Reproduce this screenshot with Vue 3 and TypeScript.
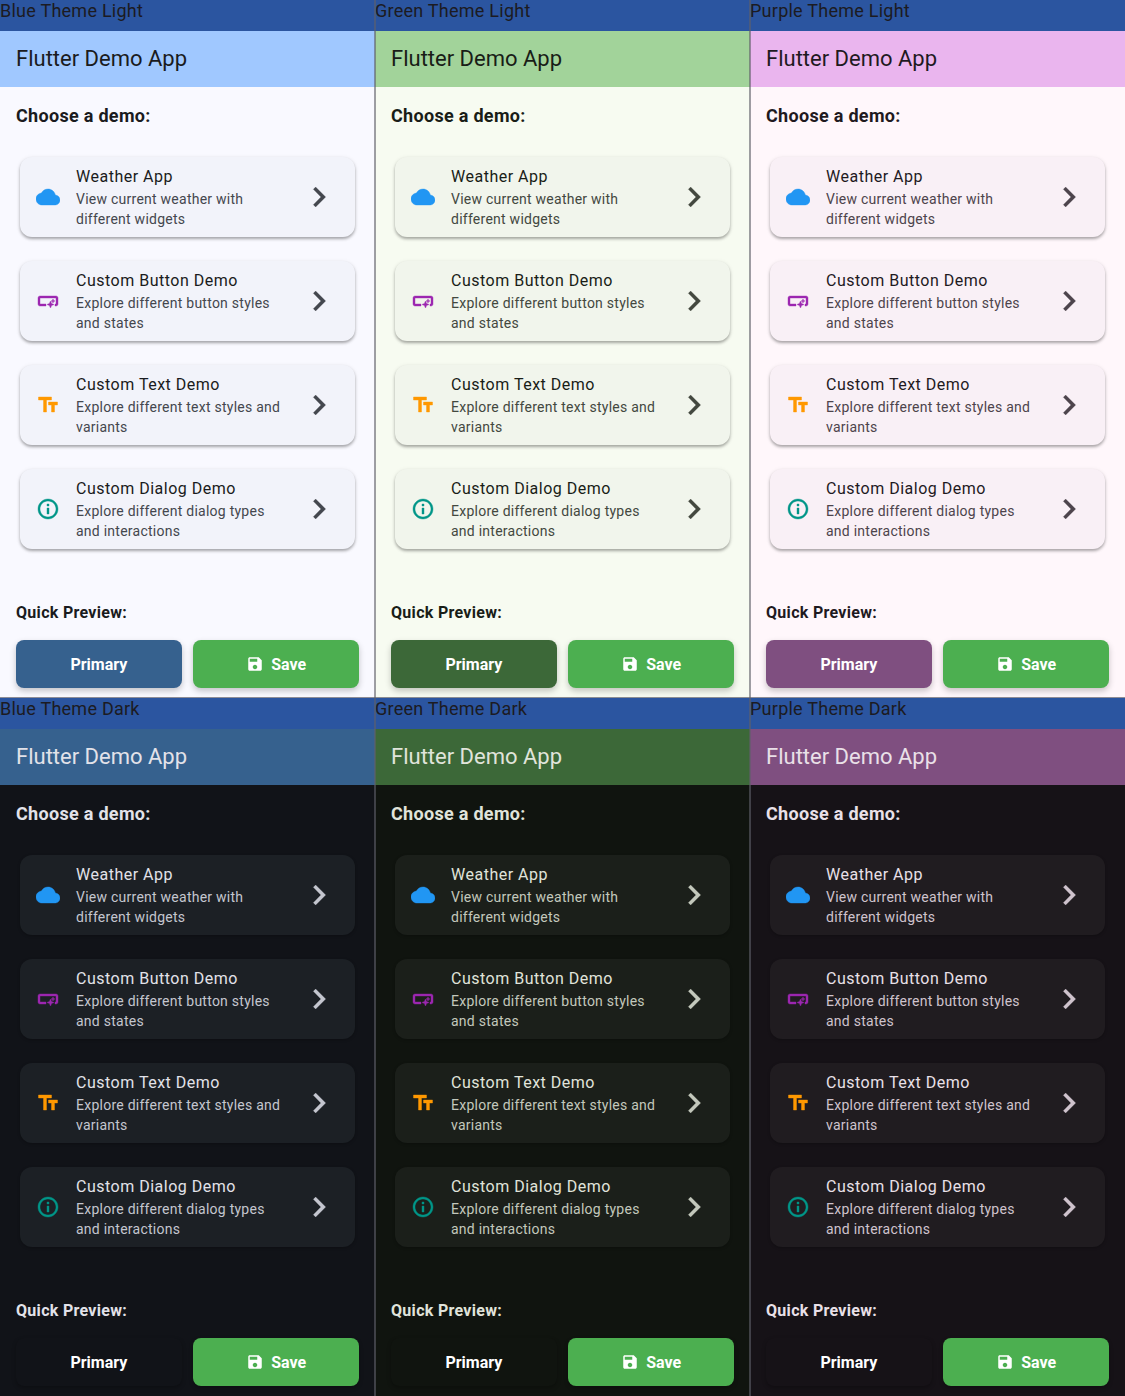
<script setup lang="ts">
const themes = [
  { key: 'blue-light', label: 'Blue Theme Light' },
  { key: 'green-light', label: 'Green Theme Light' },
  { key: 'purple-light', label: 'Purple Theme Light' },
  { key: 'blue-dark', label: 'Blue Theme Dark' },
  { key: 'green-dark', label: 'Green Theme Dark' },
  { key: 'purple-dark', label: 'Purple Theme Dark' },
]

const demos = [
  {
    title: 'Weather App',
    sub: 'View current weather with different widgets',
    color: '#2196f3',
    icon: 'M19.35 10.04C18.67 6.59 15.64 4 12 4 9.11 4 6.6 5.64 5.35 8.04 2.34 8.36 0 10.91 0 14c0 3.31 2.69 6 6 6h13c2.76 0 5-2.24 5-5 0-2.64-2.05-4.78-4.65-4.96z',
  },
  {
    title: 'Custom Button Demo',
    sub: 'Explore different button styles and states',
    color: '#9c27b0',
    icon: 'M22 9v6c0 1.1-.9 2-2 2h-1v-2h1V9H4v6h6v2H4c-1.1 0-2-.9-2-2V9c0-1.1.9-2 2-2h16c1.1 0 2 .9 2 2zm-7.5 10 1.09-2.41L18 15.5l-2.41-1.09L14.5 12l-1.09 2.41L11 15.5l2.41 1.09L14.5 19zm2.5-5 .62-1.38L19 12l-1.38-.62L17 10l-.62 1.38L15 12l1.38.62L17 14z',
  },
  {
    title: 'Custom Text Demo',
    sub: 'Explore different text styles and variants',
    color: '#ff9800',
    icon: 'M2.5 4v3h5v12h3V7h5V4h-13zm19 5h-9v3h3v7h3v-7h3V9z',
  },
  {
    title: 'Custom Dialog Demo',
    sub: 'Explore different dialog types and interactions',
    color: '#009688',
    icon: 'M11 7h2v2h-2zm0 4h2v6h-2zm1-9C6.48 2 2 6.48 2 12s4.48 10 10 10 10-4.48 10-10S17.52 2 12 2zm0 18c-4.41 0-8-3.59-8-8s3.59-8 8-8 8 3.59 8 8-3.59 8-8 8z',
  },
]
</script>

<template>
  <div class="grid">
    <section v-for="t in themes" :key="t.key" class="cell" :class="t.key">
      <div class="label">{{ t.label }}</div>
      <header class="appbar">Flutter Demo App</header>
      <main class="body">
        <h2 class="choose">Choose a demo:</h2>
        <div class="cards">
          <div v-for="d in demos" :key="d.title" class="card">
            <svg class="icon" viewBox="0 0 24 24" :fill="d.color" :stroke="d.color" stroke-width="0.4"><path :d="d.icon" /></svg>
            <div class="text">
              <div class="title">{{ d.title }}</div>
              <div class="sub">{{ d.sub }}</div>
            </div>
            <svg class="chevron" viewBox="0 0 24 24"><path d="M10 6 8.59 7.41 13.17 12l-4.58 4.59L10 18l6-6z" /></svg>
          </div>
        </div>
        <h3 class="quick">Quick Preview:</h3>
        <div class="buttons">
          <button class="btn primary">Primary</button>
          <button class="btn save">
            <svg class="save-icon" viewBox="0 0 24 24" fill="#fff"><path d="M17 3H5c-1.11 0-2 .9-2 2v14c0 1.1.89 2 2 2h14c1.1 0 2-.9 2-2V7l-4-4zm-5 16c-1.66 0-3-1.34-3-3s1.34-3 3-3 3 1.34 3 3-1.34 3-3 3zm3-10H5V5h10v4z" /></svg>
            Save
          </button>
        </div>
      </main>
    </section>
  </div>
</template>

<style>
html,
body {
  margin: 0;
  background: #fff;
}
</style>

<style scoped>
.grid {
  display: grid;
  grid-template-columns: repeat(3, 375px);
  grid-auto-rows: 698px;
  font-family: Roboto, 'Liberation Sans', sans-serif;
}

.cell {
  position: relative;
  display: flex;
  flex-direction: column;
  background: var(--bg);
}

/* hairlines between the previews, drawn over everything */
.cell::before {
  content: '';
  position: absolute;
  z-index: 1;
  top: 0;
  bottom: 0;
  right: -1px;
  width: 2px;
  background: rgba(95, 95, 105, 0.6);
}

.cell::after {
  content: '';
  position: absolute;
  z-index: 1;
  left: 0;
  right: 0;
  bottom: 0;
  height: 1px;
  background: rgba(95, 95, 105, 0.7);
}

.cell:nth-child(3n)::before {
  display: none;
}

.cell:nth-child(n + 4)::after {
  display: none;
}

.blue-light { --bg: #f9f9ff; --bar: #a0c8ff; --card: #f2f3fa; --primary: #36618e; --ink: #1a1b20; --muted: #44474e; }
.green-light { --bg: #f7fbf1; --bar: #a2d39a; --card: #f1f5ec; --primary: #3c6838; --ink: #191d17; --muted: #43483f; }
.purple-light { --bg: #fff7fb; --bar: #eab5ee; --card: #f9f0f6; --primary: #7f4f80; --ink: #1f1a1f; --muted: #4d444c; }
.blue-dark { --bg: #111318; --bar: #36618e; --card: #1c2025; --primary: #111318; --ink: #e2e2e9; --muted: #c4c6cf; }
.green-dark { --bg: #10140f; --bar: #3c6838; --card: #1b1f1a; --primary: #10140f; --ink: #e0e4db; --muted: #c3c8bc; }
.purple-dark { --bg: #161217; --bar: #7f4f80; --card: #201c20; --primary: #161217; --ink: #e9e0e8; --muted: #cfc3cd; }

.blue-light,
.green-light,
.purple-light {
  --card-shadow: 0 2px 3px rgba(0, 0, 0, 0.3), 0 1px 5px rgba(0, 0, 0, 0.08);
  --btn-shadow: 0 3px 6px rgba(0, 0, 0, 0.22);
}

.blue-dark,
.green-dark,
.purple-dark {
  --card-shadow: 0 1px 3px rgba(0, 0, 0, 0.25);
  --btn-shadow: 0 2px 4px rgba(0, 0, 0, 0.25);
}

.label {
  height: 31px;
  flex: none;
  background: #2b55a0;
  color: #1c1b22;
  font-size: 18px;
  line-height: 22px;
  letter-spacing: 0.25px;
  white-space: nowrap;
}

.appbar {
  height: 56px;
  flex: none;
  box-sizing: border-box;
  padding: 0 16px 2px;
  display: flex;
  align-items: center;
  background: var(--bar);
  color: var(--ink);
  font-size: 22px;
}

.body {
  flex: 1;
  padding: 17px 16px 0;
}

.choose {
  margin: 0;
  font-size: 18px;
  line-height: 24px;
  font-weight: 700;
  letter-spacing: 0.3px;
  color: var(--ink);
}

.cards {
  margin-top: 29px;
  padding: 0 4px;
  display: flex;
  flex-direction: column;
  gap: 24px;
}

.card {
  height: 80px;
  box-sizing: border-box;
  padding: 0 16px;
  display: flex;
  align-items: center;
  gap: 16px;
  border-radius: 12px;
  background: var(--card);
  box-shadow: var(--card-shadow);
}

.icon {
  width: 24px;
  height: 24px;
  flex: none;
}

.text {
  flex: 1;
  min-width: 0;
}

.title {
  font-size: 16px;
  line-height: 24px;
  letter-spacing: 0.5px;
  color: var(--ink);
}

.sub {
  font-size: 14px;
  line-height: 20px;
  letter-spacing: 0.25px;
  color: var(--muted);
}

.chevron {
  width: 40px;
  height: 40px;
  flex: none;
  fill: var(--muted);
  stroke: var(--muted);
  stroke-width: 0.15;
}

.quick {
  margin: 53px 0 0;
  font-size: 16px;
  line-height: 22px;
  font-weight: 700;
  letter-spacing: 0.3px;
  color: var(--ink);
}

.buttons {
  margin-top: 16px;
  display: flex;
  gap: 11.5px;
}

.btn {
  flex: 1;
  height: 48px;
  border: none;
  border-radius: 8px;
  padding: 0;
  display: flex;
  align-items: center;
  justify-content: center;
  gap: 7px;
  color: #fff;
  font-family: inherit;
  font-size: 16px;
  font-weight: 700;
  box-shadow: var(--btn-shadow);
}

.primary {
  background: var(--primary);
}

.save {
  background: #4caf50;
}

.save-icon {
  width: 18px;
  height: 18px;
  flex: none;
}
</style>
